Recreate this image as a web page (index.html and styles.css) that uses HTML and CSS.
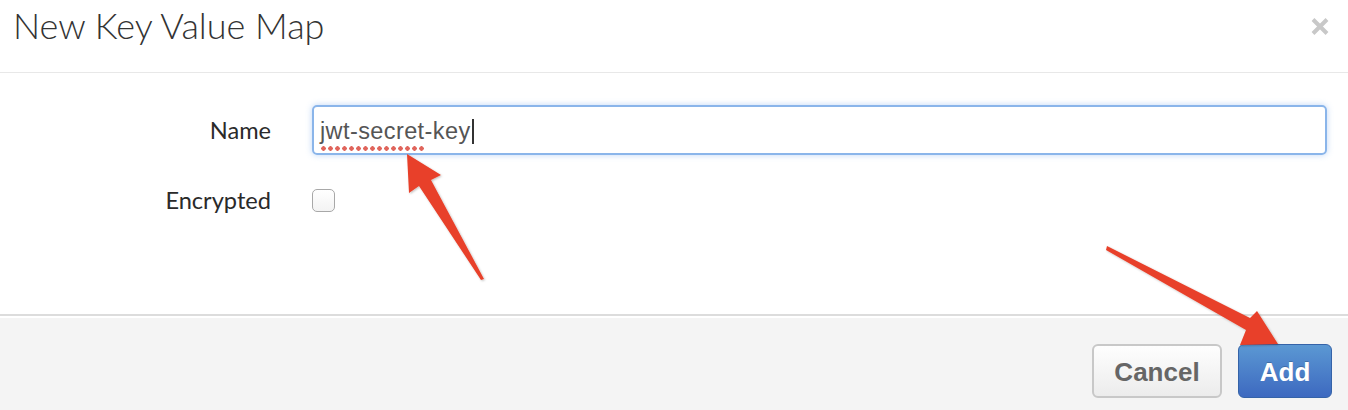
FILE: index.html
```html
<!DOCTYPE html>
<html>
<head>
<meta charset="utf-8">
<link rel="stylesheet" href="styles.css">
</head>
<body>
<div class="dialog">
  <header class="header">
    <h1 class="title">New Key Value Map</h1>
    <svg class="close" width="20" height="19" viewBox="0 0 20 19">
      <path d="M3 2.5 L17 16.5 M17 2.5 L3 16.5" stroke="#c8c8c8" stroke-width="4" stroke-linecap="butt"/>
    </svg>
  </header>
  <main class="content">
    <div class="row">
      <label class="label">Name</label>
      <div class="field">
        <div class="textbox"><span class="misspelled">jwt-secret</span>-key<span class="caret"></span></div>
      </div>
    </div>
    <div class="row row-check">
      <label class="label">Encrypted</label>
      <div class="field">
        <span class="checkbox"></span>
      </div>
    </div>
  </main>
  <footer class="footer">
    <button class="btn btn-cancel">Cancel</button>
    <button class="btn btn-add">Add</button>
  </footer>
  <svg class="arrows" width="1348" height="410" viewBox="0 0 1348 410">
    <defs>
      <filter id="sh" x="-20%" y="-20%" width="140%" height="140%">
        <feDropShadow dx="1" dy="1" stdDeviation="1" flood-color="#000" flood-opacity="0.25"/>
      </filter>
    </defs>
    <polygon filter="url(#sh)" fill="#e8412a" points="407,154 441,175 431,180 484,279 481,280 419,186 409,193"/>
    <polygon filter="url(#sh)" fill="#e8412a" points="1107,246 1250,318 1257,311 1278,344 1240,345 1246,330 1106,250"/>
  </svg>
</div>
</body>
</html>
```
FILE: styles.css
```css
html, body {
  margin: 0;
  padding: 0;
  background: #fff;
}
.dialog {
  position: relative;
  width: 1348px;
  height: 410px;
  overflow: hidden;
  font-family: Lato, "Liberation Sans", sans-serif;
}
.header {
  box-sizing: border-box;
  height: 73px;
  border-bottom: 1px solid #e8e8e8;
  display: flex;
  justify-content: space-between;
  align-items: flex-start;
  padding: 4px 18px 0 13px;
}
.title {
  margin: 0;
  font-family: Lato, sans-serif;
  font-weight: 300;
  font-size: 36px;
  line-height: 42px;
  color: #333;
}
.close {
  margin-top: 13px;
}
.content {
  box-sizing: border-box;
  height: 241px;
  padding-top: 32px;
  display: flex;
  flex-direction: column;
  gap: 20px;
}
.row {
  display: flex;
  align-items: center;
  height: 50px;
}
.label {
  width: 271px;
  text-align: right;
  font-family: Lato, sans-serif;
  font-size: 23.6px;
  color: #2a2a2a;
}
.field {
  margin-left: 41px;
  flex: 1;
  padding-right: 21px;
  display: flex;
  align-items: center;
}
.textbox {
  box-sizing: border-box;
  width: 100%;
  height: 50px;
  border: 2px solid #8ab5ea;
  border-radius: 5px;
  box-shadow: 0 0 6px rgba(110, 165, 235, 0.45);
  padding: 2px 6px 0;
  display: flex;
  align-items: center;
  font-family: "Liberation Sans", Arial, sans-serif;
  font-size: 23.5px;
  letter-spacing: 0.4px;
  color: #555;
  white-space: pre;
}
.misspelled {
  position: relative;
}
.misspelled::after {
  content: "";
  position: absolute;
  left: 0;
  right: 0;
  bottom: -6px;
  height: 5px;
  background-image: radial-gradient(circle, #e0655c 2px, transparent 2.5px);
  background-size: 7px 5px;
  background-repeat: repeat-x;
}
.caret {
  display: inline-block;
  width: 2px;
  height: 25px;
  background: #333;
  margin-left: 1px;
}
.checkbox {
  box-sizing: border-box;
  width: 23px;
  height: 23px;
  border: 1px solid #a8a8a8;
  border-radius: 5px;
  background: linear-gradient(#fff, #f3f3f3);
}
.footer {
  box-sizing: border-box;
  height: 96px;
  border-top: 2px solid #dcdcdc;
  box-shadow: inset 0 2px 0 #fff;
  background: #f4f4f4;
  padding: 28px 16px 0 0;
  display: flex;
  justify-content: flex-end;
  align-items: flex-start;
  gap: 16px;
}
.btn {
  box-sizing: border-box;
  height: 54px;
  border-radius: 6px;
  font-family: "Liberation Sans", Arial, sans-serif;
  font-weight: bold;
  font-size: 26px;
  padding: 2px 0 0;
  cursor: pointer;
}
.btn-cancel {
  width: 130px;
  border: 2px solid #c8c8c8;
  background: linear-gradient(#fefefe, #ececec);
  color: #666;
}
.btn-add {
  width: 94px;
  border: 1px solid #3563a8;
  background: linear-gradient(#5b98d3, #3d69c0);
  color: #fff;
  text-shadow: 0 -1px 0 rgba(0, 0, 0, 0.2);
}
.arrows {
  position: absolute;
  left: 0;
  top: 0;
  pointer-events: none;
}
```
